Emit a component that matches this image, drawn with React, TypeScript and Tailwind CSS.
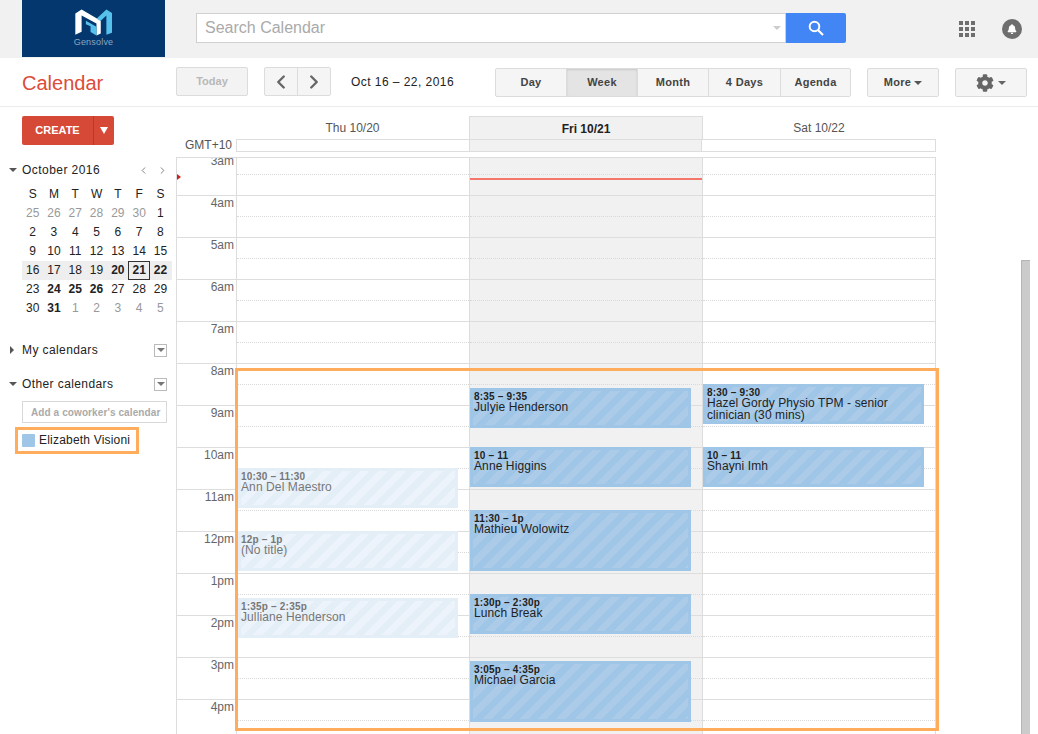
import { ChevronLeft, ChevronRight } from "lucide-react";
import { FaBell, FaCog } from "react-icons/fa";

type CalEvent = {
  top: number;
  height: number;
  time: string;
  title: string;
};

const HOURS = ["3am", "4am", "5am", "6am", "7am", "8am", "9am", "10am", "11am", "12pm", "1pm", "2pm", "3pm", "4pm"];

const MONTH_ROWS = [
  ["25", "26", "27", "28", "29", "30", "1"],
  ["2", "3", "4", "5", "6", "7", "8"],
  ["9", "10", "11", "12", "13", "14", "15"],
  ["16", "17", "18", "19", "20", "21", "22"],
  ["23", "24", "25", "26", "27", "28", "29"],
  ["30", "31", "1", "2", "3", "4", "5"]
];

const BOLD_DAYS = ["20", "21", "22", "24", "25", "26", "31"];

// top is measured from the 3am line, which sits 4px above the visible grid
const THU_EVENTS: CalEvent[] = [
  { top: 315, height: 40, time: "10:30 – 11:30", title: "Ann Del Maestro" },
  { top: 378, height: 40, time: "12p – 1p", title: "(No title)" },
  { top: 445, height: 40, time: "1:35p – 2:35p", title: "Julliane Henderson" }
];

const FRI_EVENTS: CalEvent[] = [
  { top: 235, height: 40, time: "8:35 – 9:35", title: "Julyie Henderson" },
  { top: 294, height: 40, time: "10 – 11", title: "Anne Higgins" },
  { top: 357, height: 61, time: "11:30 – 1p", title: "Mathieu Wolowitz" },
  { top: 441, height: 40, time: "1:30p – 2:30p", title: "Lunch Break" },
  { top: 508, height: 61, time: "3:05p – 4:35p", title: "Michael Garcia" }
];

const SAT_EVENTS: CalEvent[] = [
  { top: 231, height: 40, time: "8:30 – 9:30", title: "Hazel Gordy Physio TPM - senior clinician (30 mins)" },
  { top: 294, height: 40, time: "10 – 11", title: "Shayni Imh" }
];

function Caret({ className }: { className: string }) {
  return <span className={`inline-block w-0 h-0 border-x-[4px] border-x-transparent border-t-[4px] ${className}`} />;
}

function Logo() {
  return (
    <svg viewBox="225 27 112 80" className="w-[37px] h-[27px] mt-[9px]">
      <polygon points="226,40 245,28 303,62 303,100 290,106 290,70 245,46 245,95 226,104" fill="#ffffff" />
      <polygon points="290,56 320,28 337,38 337,98 320,104 320,46 303,62" fill="#56c1ea" />
      <polygon points="258,62 290,80 290,106 272,96 272,78 258,72" fill="#56c1ea" />
    </svg>
  );
}

function Header() {
  return (
    <div className="flex h-[58px] bg-[#f1f1f1] pl-[22px]">
      <div className="flex flex-col items-center w-[143px] h-[57px] bg-[#03376e]">
        <Logo />
        <div className="text-[9px] leading-[10px] mt-[1px] text-[#8fa6bf] tracking-[0.2px]">Gensolve</div>
      </div>
      <div className="flex ml-[31px] mt-[13px] h-[30px] w-[650px]">
        <div className="flex flex-1 items-center justify-between bg-white border border-[#d0d0d0] pl-[8px] pr-[4px]">
          <span className="text-[16px] -mt-[1px] text-[#aaaaaa]">Search Calendar</span>
          <Caret className="border-t-[#cccccc]" />
        </div>
        <div className="flex items-center justify-center w-[60px] bg-[#4285f4] rounded-r-[2px]">
          <svg viewBox="0 0 16 16" className="w-[16px] h-[16px]" fill="none" stroke="#ffffff">
            <circle cx="6.5" cy="6.5" r="4.8" strokeWidth="2" />
            <line x1="10" y1="10" x2="15" y2="15" strokeWidth="2.2" />
          </svg>
        </div>
      </div>
      <div className="grid grid-cols-3 gap-[2px] w-[16px] h-[16px] ml-[113px] mt-[21px]">
        {Array.from({ length: 9 }).map((_, i) => (
          <span key={i} className="w-[4px] h-[4px] bg-[#6e6e6e]" />
        ))}
      </div>
      <div className="flex items-center justify-center w-[20px] h-[20px] ml-[27px] mt-[19px] rounded-full bg-[#6e6e6e]">
        <FaBell size={10} className="text-white" />
      </div>
    </div>
  );
}

function ToolButton({ label, width, active, last }: { label: string; width: string; active?: boolean; last?: boolean }) {
  return (
    <div
      className={`flex items-center justify-center h-full text-[11px] font-bold tracking-[0.3px] text-[#444444] ${width} ${last ? "" : "border-r border-[#dcdcdc]"} ${
        active ? "bg-[#e4e4e4] shadow-[inset_0_1px_2px_rgba(0,0,0,0.12)]" : ""
      }`}
    >
      {label}
    </div>
  );
}

function Toolbar() {
  return (
    <div className="flex h-[49px] border-b border-[#ebebeb] bg-white">
      <div className="w-[176px] pl-[22px] pt-[12px] text-[20px] leading-[26px] text-[#dd4b39]">Calendar</div>
      <div className="flex items-center justify-center w-[72px] h-[29px] mt-[9px] border border-[#dcdcdc] rounded-[2px] bg-[#f3f3f3] text-[11px] font-bold text-[#b8b8b8]">
        Today
      </div>
      <div className="flex w-[67px] h-[29px] mt-[9px] ml-[16px] border border-[#dcdcdc] rounded-[2px] bg-[#f5f5f5] text-[#666666]">
        <div className="flex items-center justify-center flex-1 border-r border-[#dcdcdc]">
          <ChevronLeft size={22} strokeWidth={2.6} />
        </div>
        <div className="flex items-center justify-center flex-1">
          <ChevronRight size={22} strokeWidth={2.6} />
        </div>
      </div>
      <div className="w-[164px] pl-[20px] pt-[16px] text-[12px] leading-[16px] tracking-[0.45px] text-[#222222]">Oct 16 – 22, 2016</div>
      <div className="flex w-[356px] h-[29px] mt-[10px] border border-[#dcdcdc] rounded-[2px] bg-[#f5f5f5]">
        <ToolButton label="Day" width="w-[71px]" />
        <ToolButton label="Week" width="w-[71px]" active />
        <ToolButton label="Month" width="w-[71px]" />
        <ToolButton label="4 Days" width="w-[72px]" />
        <ToolButton label="Agenda" width="flex-1" last />
      </div>
      <div className="flex items-center justify-center gap-[3px] w-[72px] h-[29px] mt-[10px] ml-[16px] border border-[#dcdcdc] rounded-[2px] bg-[#f5f5f5] text-[11px] font-bold tracking-[0.3px] text-[#444444]">
        More
        <Caret className="border-t-[#555555]" />
      </div>
      <div className="flex items-center justify-center gap-[4px] w-[72px] h-[29px] mt-[10px] ml-[16px] border border-[#dcdcdc] rounded-[2px] bg-[#f5f5f5]">
        <FaCog size={18} className="text-[#666666]" />
        <Caret className="border-t-[#666666]" />
      </div>
    </div>
  );
}

function MiniCalendar() {
  return (
    <div className="mt-[17px]">
      <div className="flex items-center h-[16px] text-[#222222]">
        <Caret className="ml-[9px] mr-[5px] border-t-[#555555]" />
        <span className="text-[12px] tracking-[0.45px]">October 2016</span>
        <ChevronLeft size={11} strokeWidth={2} className="ml-[38px] text-[#777777]" />
        <ChevronRight size={11} strokeWidth={2} className="ml-[8px] text-[#777777]" />
      </div>
      <div className="grid grid-cols-[repeat(7,21.3px)] w-[150px] ml-[22px] mt-[7px] text-[12px] leading-[19px] text-center text-[#222222]">
        {["S", "M", "T", "W", "T", "F", "S"].map((d, i) => (
          <div key={i}>{d}</div>
        ))}
      </div>
      {MONTH_ROWS.map((row, r) => (
        <div
          key={r}
          className={`grid grid-cols-[repeat(7,21.3px)] w-[150px] ml-[22px] text-[12px] leading-[19px] text-center ${r === 3 ? "bg-[#eeeeee]" : ""}`}
        >
          {row.map((d, i) => {
            const faded = (r === 0 && i < 6) || (r === 5 && i > 1);
            const today = r === 3 && d === "21";
            const bold = !faded && BOLD_DAYS.includes(d);
            return (
              <div
                key={i}
                className={`h-[19px] ${faded ? "text-[#999999]" : "text-[#222222]"} ${bold ? "font-bold" : ""} ${
                  today ? "border border-[#333333] leading-[17px]" : ""
                }`}
              >
                {d}
              </div>
            );
          })}
        </div>
      ))}
    </div>
  );
}

function CalendarListHead({ open, label }: { open: boolean; label: string }) {
  return (
    <div className="flex items-center h-[16px] text-[12px] tracking-[0.4px] text-[#222222]">
      {open ? (
        <Caret className="ml-[9px] mr-[5px] border-t-[#555555]" />
      ) : (
        <span className="inline-block w-0 h-0 ml-[10px] mr-[8px] border-y-[4px] border-y-transparent border-l-[4px] border-l-[#555555]" />
      )}
      <span className="flex-1">{label}</span>
      <span className="flex items-center justify-center w-[13px] h-[13px] mr-[9px] border border-[#bbbbbb]">
        <Caret className="border-t-[#777777]" />
      </span>
    </div>
  );
}

function Sidebar() {
  return (
    <div className="w-[176px] shrink-0">
      <div className="flex w-[92px] h-[29px] ml-[22px] mt-[9px] rounded-[2px] bg-[#d64937] text-white">
        <div className="flex items-center justify-center w-[72px] border-r border-[#b93a2b] text-[11px] font-bold">CREATE</div>
        <div className="flex items-center justify-center flex-1">
          <span className="inline-block w-0 h-0 border-x-[4px] border-x-transparent border-t-[7px] border-t-white" />
        </div>
      </div>
      <MiniCalendar />
      <div className="mt-[24px]">
        <CalendarListHead open={false} label="My calendars" />
      </div>
      <div className="mt-[18px]">
        <CalendarListHead open label="Other calendars" />
      </div>
      <div className="flex items-center w-[145px] h-[22px] ml-[22px] mt-[9px] pl-[8px] border border-[#d9d9d9] text-[10px] font-bold tracking-[0.1px] text-[#aaaaaa] whitespace-nowrap overflow-hidden">
        Add a coworker's calendar
      </div>
      <div className="flex items-center ml-[22px] mt-[9px] h-[16px]">
        <span className="w-[13px] h-[13px] bg-[#9fc6e7] rounded-[1px]" />
        <span className="ml-[4px] text-[12px] tracking-[0.2px] text-[#222222]">Elizabeth Visioni</span>
      </div>
    </div>
  );
}

function EventBlock({ event, faded }: { event: CalEvent; faded?: boolean }) {
  return (
    <div
      className={`absolute ${faded ? "left-[1px] w-[220px] bg-[#e4eef7] text-[#777777]" : "left-0 w-[221px] bg-[#9fc6e7] text-[#222222]"}`}
      style={{ top: event.top, height: event.height }}
    >
      <div
        className={`absolute top-[3px] left-[3px] right-[3px] bottom-[3px] ${
          faded
            ? "bg-[repeating-linear-gradient(135deg,#e4eef7_0,#e4eef7_6.5px,#edf3fa_6.5px,#edf3fa_13px)]"
            : "bg-[repeating-linear-gradient(135deg,#9fc6e7_0,#9fc6e7_6.5px,#abcbe9_6.5px,#abcbe9_13px)]"
        }`}
      />
      <div className={`relative pt-[3px] pr-[8px] ${faded ? "pl-[3px]" : "pl-[4px]"}`}>
        <div className="text-[10px] leading-[11px] font-bold tracking-[0.2px]">{event.time}</div>
        <div className="text-[12px] leading-[11.5px] tracking-[0.1px]">{event.title}</div>
      </div>
    </div>
  );
}

function DayColumn({ events, today, faded }: { events: CalEvent[]; today?: boolean; faded?: boolean }) {
  return (
    <div className={`relative w-[233px] border-l border-[#dddddd] ${today ? "bg-[#f1f1f1]" : ""}`}>
      {HOURS.map((h) => (
        <div key={h} className="h-[42px] border-t border-[#dddddd]">
          <div className="h-[21px] border-b border-dotted border-[#d9d9d9]" />
        </div>
      ))}
      {events.map((e) => (
        <EventBlock key={e.time} event={e} faded={faded} />
      ))}
      {today && <div className="absolute top-[25px] left-0 right-0 h-[2px] bg-[#f4776b]" />}
    </div>
  );
}

function WeekGrid() {
  return (
    <div className="w-[760px]">
      <div className="flex h-[32px]">
        <div className="w-[60px]" />
        <div className="w-[233px] pt-[14px] text-center text-[12px] leading-[14px] text-[#555555]">Thu 10/20</div>
        <div className="w-[234px] mt-[9px] pt-[5px] text-center text-[12px] leading-[14px] font-bold text-[#222222] bg-[#f1f1f1] border-x border-t border-[#dddddd]">
          Fri 10/21
        </div>
        <div className="w-[232px] pt-[14px] text-center text-[12px] leading-[14px] text-[#555555]">Sat 10/22</div>
      </div>
      <div className="flex h-[18px]">
        <div className="w-[60px] pr-[4px] text-right text-[12px] leading-[13px] text-[#555555] whitespace-nowrap">GMT+10</div>
        <div className="flex flex-1 h-[13px] border border-[#dddddd]">
          <div className="w-[232px]" />
          <div className="w-[233px] bg-[#f1f1f1] border-x border-[#dddddd]" />
        </div>
      </div>
      <div className="h-[577px] overflow-hidden border-t border-r border-l border-[#dddddd]">
        <div className="relative flex -mt-[5px]">
          <div className="w-[59px]">
            {HOURS.map((h) => (
              <div key={h} className="h-[42px] border-t border-[#dddddd] pr-[2px] text-right text-[12px] leading-[14px] text-[#666666]">
                {h}
              </div>
            ))}
          </div>
          <DayColumn events={THU_EVENTS} faded />
          <DayColumn events={FRI_EVENTS} today />
          <DayColumn events={SAT_EVENTS} />
          <span className="absolute top-[21px] left-0 w-0 h-0 border-y-[3px] border-y-transparent border-l-[4px] border-l-[#cc2222]" />
        </div>
      </div>
    </div>
  );
}

export default function App() {
  return (
    <div className="relative w-[1038px] h-[734px] overflow-hidden bg-white font-['Liberation_Sans',Arial,sans-serif]">
      <Header />
      <Toolbar />
      <div className="flex">
        <Sidebar />
        <WeekGrid />
      </div>
      {/* scrollbar and the two orange annotations lie over the page */}
      <div className="absolute top-[260px] bottom-0 left-[1021px] w-[9px] bg-[#cbcbcb] border-l border-t border-[#b5b5b5]" />
      <div className="absolute top-[368px] left-[235px] w-[704px] h-[363px] border-[3px] border-[#ffad5c]" />
      <div className="absolute top-[427px] left-[15px] w-[124px] h-[27px] border-[3px] border-[#ffad5c]" />
    </div>
  );
}
